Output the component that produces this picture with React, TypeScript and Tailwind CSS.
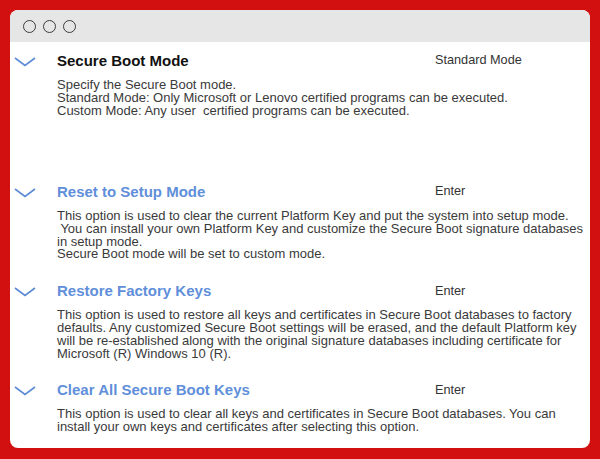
import React from "react";

const Chevron = () => (
  <svg width="22" height="10" viewBox="0 0 22 10" className="block">
    <polyline points="1,1 11,8.5 21,1" fill="none" stroke="#5b8bd6" strokeWidth="1.6" strokeLinejoin="miter" />
  </svg>
);

type Row = { title: string; value: string; blue: boolean; lines: string[] };

const rows: Row[] = [
  {
    title: "Secure Boot Mode",
    value: "Standard Mode",
    blue: false,
    lines: [
      "Specify the Secure Boot mode.",
      "Standard Mode: Only Microsoft or Lenovo certified programs can be executed.",
      "Custom Mode: Any user  certified programs can be executed.",
    ],
  },
  {
    title: "Reset to Setup Mode",
    value: "Enter",
    blue: true,
    lines: [
      "This option is used to clear the current Platform Key and put the system into setup mode.",
      " You can install your own Platform Key and customize the Secure Boot signature databases",
      "in setup mode.",
      "Secure Boot mode will be set to custom mode.",
    ],
  },
  {
    title: "Restore Factory Keys",
    value: "Enter",
    blue: true,
    lines: [
      "This option is used to restore all keys and certificates in Secure Boot databases to factory",
      "defaults. Any customized Secure Boot settings will be erased, and the default Platform key",
      "will be re-established along with the original signature databases including certificate for",
      "Microsoft (R) Windows 10 (R).",
    ],
  },
  {
    title: "Clear All Secure Boot Keys",
    value: "Enter",
    blue: true,
    lines: [
      "This option is used to clear all keys and certificates in Secure Boot databases. You can",
      "install your own keys and certificates after selecting this option.",
    ],
  },
];

export default function App() {
  return (
    <div
      className="w-[600px] h-[459px] bg-[#d2100f] pt-[10px] pl-[10px] overflow-hidden"
      style={{ fontFamily: '"Liberation Sans", Arial, sans-serif' }}
    >
      <div className="w-[580px] h-[438px] bg-white rounded-[8px] overflow-hidden flex flex-col">
        <div className="h-[32px] bg-[#e6e6e6] flex items-center pl-[13px] gap-[7px] shrink-0">
          <div className="w-[13px] h-[13px] rounded-full border-[1.3px] border-[#3c3c3c]" />
          <div className="w-[13px] h-[13px] rounded-full border-[1.3px] border-[#3c3c3c]" />
          <div className="w-[13px] h-[13px] rounded-full border-[1.3px] border-[#3c3c3c]" />
        </div>
        <div className="flex flex-col gap-[20px] pt-[9px]">
          {rows.map((r, i) => (
            <div key={i} className={"flex " + (i === 0 ? "min-h-[111px]" : "")}>
              <div className="w-[47px] shrink-0 pl-[4px] pt-[6px]">
                <Chevron />
              </div>
              <div className="flex-1">
                <div className="flex h-[20px] items-center">
                  <div
                    className={
                      "w-[378px] text-[15px] font-bold " +
                      (r.blue ? "text-[#5f8fda]" : "text-[#111111]")
                    }
                  >
                    {r.title}
                  </div>
                  <div className="text-[12.7px] text-[#333333]">{r.value}</div>
                </div>
                <div className="mt-[8px] text-[13px] leading-[12.8px] text-[#3a3a3a]">
                  {r.lines.map((l, j) => (
                    <div key={j} className="whitespace-pre">
                      {l}
                    </div>
                  ))}
                </div>
              </div>
            </div>
          ))}
        </div>
      </div>
    </div>
  );
}
